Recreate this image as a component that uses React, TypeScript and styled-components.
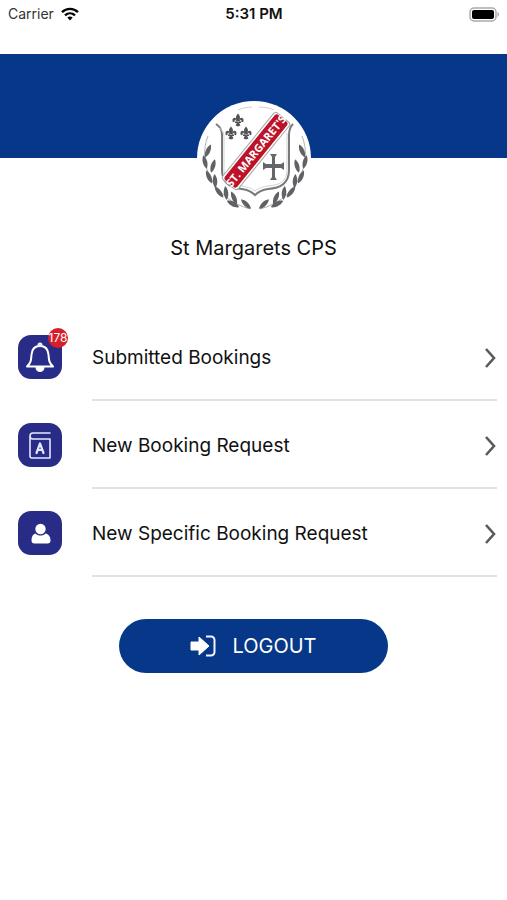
import React from "react";
import styled, { createGlobalStyle } from "styled-components";

const GlobalStyle = createGlobalStyle`
  *, *::before, *::after { box-sizing: border-box; }
  body {
    margin: 0;
    background: #fff;
    color: #111;
    font-family: Inter, "Liberation Sans", sans-serif;
  }
`;

const Screen = styled.div`
  display: flex;
  flex-direction: column;
  min-height: 100vh;
`;

const StatusBar = styled.header`
  display: grid;
  grid-template-columns: 1fr auto 1fr;
  align-items: center;
  height: 54px;
  padding: 0 7px 26px 8px;
  font-size: 14px;
  line-height: 20px;
`;

const Carrier = styled.div`
  display: flex;
  align-items: center;
  gap: 7px;
  color: #333;
`;

const Clock = styled.time`
  font-size: 15px;
  font-weight: 600;
`;

const BatterySlot = styled.div`
  display: flex;
  justify-content: flex-end;
`;

const Banner = styled.div`
  height: 104px;
  background: #063789;
`;

const Profile = styled.section`
  display: flex;
  flex-direction: column;
  align-items: center;
  gap: 18px;
  margin-top: -57px;
`;

const CrestFrame = styled.div`
  width: 114px;
  height: 114px;
  border-radius: 50%;
  overflow: hidden;
  background: #fff;

  svg { display: block; }
`;

const SchoolName = styled.h1`
  margin: 0;
  font-size: 20px;
  line-height: 30px;
  font-weight: 400;
`;

const Menu = styled.nav`
  display: flex;
  flex-direction: column;
  margin-top: 50px;
  padding: 0 10px 0 18px;
`;

const MenuItem = styled.a`
  display: flex;
  align-items: center;
  gap: 30px;
  height: 88px;
  color: inherit;
  text-decoration: none;
`;

const IconTile = styled.span`
  position: relative;
  display: flex;
  flex: none;
  width: 44px;
  height: 44px;
  border-radius: 13px;
  background: #292c86;
`;

const Badge = styled.span`
  position: absolute;
  top: -7px;
  right: -6px;
  display: flex;
  align-items: center;
  justify-content: center;
  width: 20px;
  height: 20px;
  border-radius: 50%;
  background: #d71f2b;
  color: #fff;
  font-size: 12px;
  line-height: 20px;
`;

const MenuLabel = styled.span`
  display: flex;
  flex: 1;
  align-items: center;
  justify-content: space-between;
  height: 88px;
  padding-top: 4px;
  border-bottom: 2px solid #e2e2e2;
  font-size: 19px;
  line-height: 28px;
`;

const LogoutButton = styled.button`
  display: flex;
  align-items: center;
  justify-content: center;
  gap: 16px;
  align-self: center;
  width: 53%;
  height: 54px;
  margin-top: 42px;
  padding: 0;
  border: 0;
  border-radius: 27px;
  background: #063789;
  color: #fff;
  font-family: inherit;
  font-size: 20px;
  line-height: 28px;
  cursor: pointer;
`;

const WifiIcon = () => (
  <svg width="18" height="14" viewBox="0 0 18 14" fill="none" stroke="#050505" strokeWidth="2.4" aria-hidden="true">
    <path d="M1 5.1C5.5 .8 12.500 .8 17 5.100" />
    <path d="M4 8.400c2.900-2.700 7.100-2.700 10 0" />
    <path d="M6.300 10.600c1.600-1.400 3.800-1.400 5.400 0L9 13.500z" fill="#050505" stroke="none" />
  </svg>
);

const BatteryIcon = () => (
  <svg width="31" height="15" viewBox="0 0 31 15" aria-hidden="true">
    <rect x="1" y="1" width="26" height="13" rx="4" fill="#fff" stroke="#aaa" strokeWidth="1.500" />
    <rect x="3" y="3" width="22" height="9" rx="2" fill="#000" />
    <path d="M28.500 5v5c2-.8 2-4.200 0-5z" fill="#aaa" />
  </svg>
);

const Fleur = ({ x, y }: { x: number; y: number }) => (
  <g transform={`translate(${x} ${y})`} fill="#515356">
    <path d="M0-6.500C-3-3-2-1.500-1 1h2C2-1.500 3-3 0-6.500z" />
    <path d="M-1 1C-1.500-3.500-6-3-5.500 1c.2 1.500 1.800 1.500 2.200.4C-3.800-1-2-.5-1.700 2zM1 1C1.500-3.500 6-3 5.500 1c-.2 1.500-1.800 1.500-2.200.4C3.800-1 2-.5 1.700 2z" />
    <path d="M-3 1.500h6v1.600H1.200L2.500 5.500 0 6.500l-2.500-1L-1.200 3.100H-3z" />
  </g>
);

const leaves = [
  [11, 50, 24], [8, 61, -14], [16, 65, 16], [12, 76, -24],
  [18, 80, -4], [22, 91, -38], [29, 92, -6], [36, 103, -62],
  [37, 97, -24], [49, 103, -46],
];

const Laurel = () => (
  <g fill="#606265">
    <path d="M11 35C0 62 16 98 53 108" fill="none" stroke="#b2b3b4" strokeWidth="1" />
    {leaves.map(([x, y, angle]) => (
      <path key={`${x}-${y}`} transform={`translate(${x} ${y}) rotate(${angle})`} d="M0-7C3-3 3 3 0 7-3 3-3-3 0-7z" />
    ))}
  </g>
);

const Crest = () => (
  <svg width="114" height="114" viewBox="0 0 114 114" role="img" aria-label="St Margaret's crest">
    <path d="M41 9q6-3 14-3M62 6q9 0 15 3" fill="none" stroke="#d4d0d2" strokeWidth="1" />
    <Laurel />
    <g transform="translate(116 0) scale(-1 1)"><Laurel /></g>
    <path d="M19 23q6 4 6 11v35c0 14 9 18 20 19 7 1 10 3 13 6 3-3 6-5 13-6 12-1 21-5 21-19V34q0-7 4-11" fill="#fff" stroke="#77797b" strokeWidth="2" />
    <path d="M22 27q5 3 5 9v33c0 12 8 15 18 16 7 1 10 3 13 5 3-2 6-4 13-5 11-1 19-4 19-16V32" fill="none" stroke="#d0d1d2" strokeWidth="1" />
    <Fleur x={41} y={19} />
    <Fleur x={34} y={32} />
    <Fleur x={49} y={32} />
    <path d="M73 53h7l-2 3v7h6l3-2v8l-3-2h-6v9l2 3h-7l2-3v-9h-6l-3 2v-8l3 2h6v-7z" fill="#64666a" />
    <g transform="translate(59 50) rotate(-51)">
      <rect x="-43" y="-10" width="86" height="20" rx="3" fill="#fff" stroke="#aaa4a5" strokeWidth="1" />
      <rect x="-42" y="-8" width="84" height="16" rx="3" fill="#bd1328" />
      <text x="0" y="4" textAnchor="middle" fill="#fff" fontFamily="'Liberation Sans Narrow', 'Open Sans', sans-serif" fontWeight="700" fontSize="11">ST. MARGARET'S</text>
    </g>
  </svg>
);

const BellIcon = () => (
  <svg width="44" height="44" viewBox="0 0 44 44" fill="none" stroke="#fff" strokeWidth="2" strokeLinejoin="round" aria-hidden="true">
    <path d="M9 31.500c4.500-4 4-7 4.500-12 .5-5.500 3.500-8.500 8.500-8.500s8 3 8.500 8.500c.5 5 0 8 4.500 12z" />
    <path d="M20.500 10.500V10a1.500 1.500 0 0 1 3 0v.5" />
    <path d="M18.500 32.500a3.500 3.500 0 0 0 7 0z" fill="#fff" />
  </svg>
);

const BookIcon = () => (
  <svg width="44" height="44" viewBox="0 0 44 44" fill="none" stroke="#e5e7ff" strokeWidth="1.600" strokeLinecap="round" strokeLinejoin="round" aria-hidden="true">
    <path d="M32 10H15a3 3 0 0 0 0 6h17v19H14a2 2 0 0 1-2-2V13" />
    <path d="M18.500 30l3.500-9.500 3.500 9.500M19.500 27h5" strokeWidth="2.200" />
  </svg>
);

const PersonIcon = () => (
  <svg width="44" height="44" viewBox="0 0 44 44" fill="#fff" aria-hidden="true">
    <circle cx="22.500" cy="18" r="5.200" />
    <path d="M17.500 22.500c2.500 2.800 7.500 2.800 10 0 3 .5 5 3 5 7 0 2-1 3-3 3h-13c-2 0-3-1-3-3 0-4 1.500-6.500 4-7z" />
  </svg>
);

const ChevronIcon = () => (
  <svg width="14" height="20" viewBox="0 0 14 20" fill="none" stroke="#58595b" strokeWidth="2.600" aria-hidden="true">
    <path d="M3 1l8 9-8 9" />
  </svg>
);

const LogoutIcon = () => (
  <svg width="26" height="22" viewBox="0 0 26 22" aria-hidden="true">
    <path d="M1 7h8V2l10 9-10 9v-5H1z" fill="#fff" stroke="#fff" strokeLinejoin="round" />
    <path d="M16 1.500h5a3.500 3.500 0 0 1 3.500 3.500v12a3.500 3.500 0 0 1-3.500 3.500h-5" fill="none" stroke="#f4f6ff" strokeWidth="2" />
  </svg>
);

const menuItems = [
  { label: "Submitted Bookings", icon: <BellIcon />, count: 178 },
  { label: "New Booking Request", icon: <BookIcon /> },
  { label: "New Specific Booking Request", icon: <PersonIcon /> },
];

export default function App() {
  return (
    <Screen>
      <GlobalStyle />
      <StatusBar>
        <Carrier>Carrier <WifiIcon /></Carrier>
        <Clock>5:31 PM</Clock>
        <BatterySlot><BatteryIcon /></BatterySlot>
      </StatusBar>
      <Banner />
      <Profile>
        <CrestFrame><Crest /></CrestFrame>
        <SchoolName>St Margarets CPS</SchoolName>
      </Profile>
      <Menu>
        {menuItems.map(({ label, icon, count }) => (
          <MenuItem href="#" key={label}>
            <IconTile>
              {icon}
              {count !== undefined && <Badge>{count}</Badge>}
            </IconTile>
            <MenuLabel>{label}<ChevronIcon /></MenuLabel>
          </MenuItem>
        ))}
      </Menu>
      <LogoutButton type="button"><LogoutIcon />LOGOUT</LogoutButton>
    </Screen>
  );
}
